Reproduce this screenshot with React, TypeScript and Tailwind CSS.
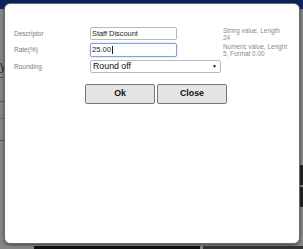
import React from "react";

export default function App() {
  const font = { fontFamily: '"Liberation Sans", Arial, sans-serif' };
  return (
    <div
      className="relative w-[303px] h-[249px] overflow-hidden bg-[#858585]"
      style={font}
    >
      {/* dimmed page behind */}
      <div className="h-[9px] bg-[#0c2461]" />
      <div className="absolute left-0 top-[60px] text-[12px] leading-[12px] text-[#2a2a3a]">y</div>
      <div className="absolute left-0 top-[77px] w-[4px] h-[1px] bg-[#5a5a5a]" />
      <div className="absolute left-0 top-[101px] w-[4px] h-[1px] bg-[#5a5a5a]" />
      <div className="absolute left-0 top-[118px] w-[4px] h-[1px] bg-[#8a5a5a]" />
      <div className="absolute left-0 top-[140px] w-[4px] h-[1px] bg-[#5a5a5a]" />
      <div className="absolute left-[34px] top-[246px] w-[166px] h-[3px] bg-[#111]" />
      <div className="absolute left-[203px] top-[246px] w-[100px] h-[3px] bg-[#333]" />
      <div className="absolute left-[300px] top-[165px] w-[3px] h-[20px] bg-[#222]" />
      <div className="absolute left-[300px] top-[187px] w-[3px] h-[20px] bg-[#222]" />

      {/* modal */}
      <div className="absolute left-[4px] top-[3px] w-[296px] h-[241px] bg-white rounded-[6px] border border-[#6a6a6a] shadow-[0_1px_3px_rgba(0,0,0,0.5)]">
        <div className="pt-[23px] pl-[9px]">
          <div className="grid grid-cols-[76px_133px_80px] grid-rows-[13px_14px_13px] gap-y-[3px]">
            <div className="self-center text-[6.5px] leading-[8px] text-[#7a7a7a]">Descriptor</div>
            <div className="w-[87px] h-[13px] border border-[#b9b9b9] rounded-[2px] flex items-center pl-[1px] text-[7.4px] text-[#222]">
              Staff Discount
            </div>
            <div className="text-[6.4px] leading-[7.5px] text-[#8a8a8a] -mt-[0.5px]">
              String value, Length
              <br />
              24
            </div>

            <div className="self-center text-[6.5px] leading-[8px] text-[#7a7a7a]">Rate(%)</div>
            <div className="w-[87px] h-[14px] border border-[#86a3d6] rounded-[2px] shadow-[0_0_2px_rgba(100,140,220,0.6)] flex items-center pl-[1px] text-[7.6px] text-[#222]">
              25.00<span className="inline-block w-[0.6px] h-[8px] bg-[#222] ml-[0.5px]" />
            </div>
            <div className="text-[6.4px] leading-[7.5px] text-[#8a8a8a] -mt-[0.5px]">
              Numeric value, Lenght
              <br />
              5, Format 0.00
            </div>

            <div className="self-center text-[6.5px] leading-[8px] text-[#7a7a7a]">Rounding</div>
            <div className="w-[131px] h-[13px] border border-[#b9b9b9] rounded-[2px] flex items-center justify-between pl-[2px] pr-[3px] text-[8.8px] text-[#111]">
              <span>Round off</span>
              <span className="text-[5px] leading-[5px]">▼</span>
            </div>
            <div />
          </div>

          <div className="flex gap-[2px] mt-[11px] ml-[71px]">
            <button className="w-[70px] h-[20px] bg-[#e4e4e4] border border-[#777] rounded-[2px] text-[8.8px] font-bold text-[#111] flex items-center justify-center">
              Ok
            </button>
            <button className="w-[70px] h-[20px] bg-[#e4e4e4] border border-[#777] rounded-[2px] text-[8.8px] font-bold text-[#111] flex items-center justify-center">
              Close
            </button>
          </div>
        </div>
      </div>
    </div>
  );
}
